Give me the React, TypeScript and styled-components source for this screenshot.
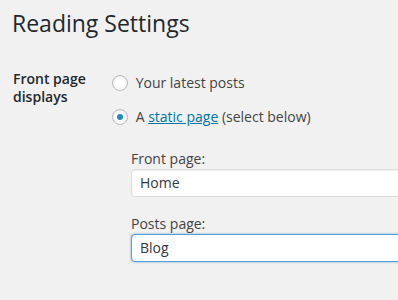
import React from 'react';
import styled, { createGlobalStyle } from 'styled-components';

const GlobalStyle = createGlobalStyle`
  html, body {
    margin: 0;
    background: #f1f1f1;
    overflow: hidden;
  }
  body {
    font-family: "Open Sans", "Liberation Sans", sans-serif;
    font-size: 14px;
    color: #444;
  }
`;

const Wrap = styled.div`
  padding: 9px 0 0 12px;
`;

const Title = styled.h1`
  margin: 0;
  font-size: 23px;
  font-weight: 400;
  line-height: 1.3;
  color: #23282d;
`;

const FormRow = styled.div`
  display: grid;
  grid-template-columns: 100px minmax(0, 1fr);
  margin-top: 31px;
`;

const RowLabel = styled.div`
  padding-left: 1px;
  font-weight: 600;
  line-height: 18px;
  color: #23282d;
`;

const Options = styled.div`
  display: flex;
  flex-direction: column;
  gap: 14px;
  padding-top: 3px;
`;

const Choice = styled.label`
  display: flex;
  align-items: center;
  line-height: 20px;
  white-space: nowrap;
`;

const Radio = styled.span<{ $checked?: boolean }>`
  box-sizing: border-box;
  width: 16px;
  height: 16px;
  margin-right: 4px;
  border: 1px solid #b4b9be;
  border-radius: 50%;
  background: #fff;
  box-shadow: inset 0 1px 2px rgba(0, 0, 0, 0.1);
  display: flex;
  align-items: center;
  justify-content: center;
  flex-shrink: 0;

  &::before {
    content: '';
    display: ${(p) => (p.$checked ? 'block' : 'none')};
    width: 6px;
    height: 6px;
    border-radius: 50%;
    background: #1e8cbe;
  }
`;

const Link = styled.a`
  color: #0073aa;
  text-decoration: underline;
`;

const Pickers = styled.div`
  display: flex;
  flex-direction: column;
  gap: 17px;
  margin-top: 22px;
  padding: 0 0 4px 19px;
  overflow: hidden;
`;

const Field = styled.div`
  display: flex;
  flex-direction: column;
`;

const FieldLabel = styled.label`
  line-height: 20px;
`;

const Select = styled.input<{ $focused?: boolean }>`
  box-sizing: border-box;
  width: calc(100% + 24px);
  height: 28px;
  padding: 0 8px;
  border: 1px solid ${(p) => (p.$focused ? '#5b9dd9' : '#ddd')};
  border-radius: 4px;
  background: #fff;
  box-shadow: ${(p) =>
    p.$focused ? '0 0 2px rgba(30, 140, 190, 0.8)' : 'inset 0 1px 2px rgba(0, 0, 0, 0.07)'};
  font-family: inherit;
  font-size: 14px;
  color: #32373c;
  outline: none;
`;

export default function App() {
  return (
    <Wrap>
      <GlobalStyle />
      <Title>Reading Settings</Title>
      <FormRow>
        <RowLabel>
          Front page
          <br />
          displays
        </RowLabel>
        <div>
          <Options>
            <Choice>
              <Radio />
              &nbsp;Your latest posts
            </Choice>
            <Choice>
              <Radio $checked />
              &nbsp;A&nbsp;<Link href="#">static page</Link>&nbsp;(select below)
            </Choice>
          </Options>
          <Pickers>
            <Field>
              <FieldLabel>Front page:</FieldLabel>
              <Select readOnly value="Home" />
            </Field>
            <Field>
              <FieldLabel>Posts page:</FieldLabel>
              <Select readOnly value="Blog" $focused />
            </Field>
          </Pickers>
        </div>
      </FormRow>
    </Wrap>
  );
}
